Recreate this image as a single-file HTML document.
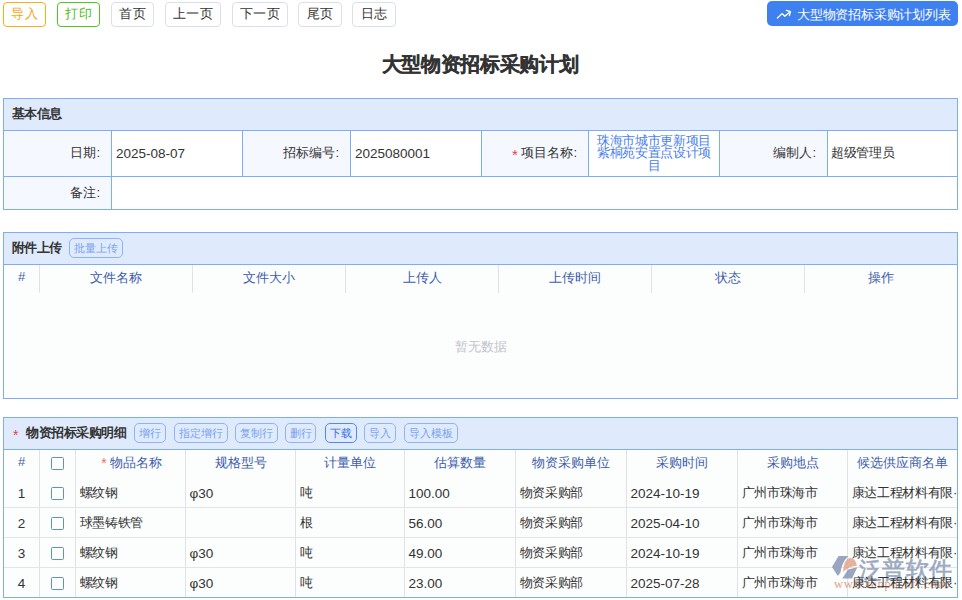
<!DOCTYPE html>
<html><head><meta charset="utf-8">
<style>
*{box-sizing:border-box;margin:0;padding:0}
html,body{width:962px;height:600px;overflow:hidden;background:#fff}
body{position:relative;font-family:"Liberation Sans",sans-serif;font-size:13px;color:#333;letter-spacing:-0.3px}
.a{position:absolute}
.n{font-size:13.8px;letter-spacing:0}
.val .n{position:relative;top:1px;left:1px;font-size:13.5px}
.tb{position:absolute;top:2px;height:25px;border:1px solid #dcdfe6;border-radius:4px;text-align:center;line-height:22px;font-size:13px;color:#333;background:#fff;letter-spacing:0.3px;text-indent:0.3px}
.sec{position:absolute;left:3px;width:955px;border:1px solid #7dacf8;background:#fff}
.hd{position:absolute;left:0;top:0;width:953px;height:32px;background:#dfeafd;border-bottom:1px solid #7dacf8}
.hd .t{position:absolute;left:8px;top:-1px;line-height:31px;font-weight:bold;font-size:13px;color:#333;letter-spacing:-0.6px}
.sb{position:absolute;top:5px;height:20px;border:1px solid #8db5f5;border-radius:5px;font-size:11px;line-height:18px;text-align:center;color:#78a3ef;background:transparent;letter-spacing:0}
.lbl{position:absolute;background:#f5f8fe;text-align:right;padding-right:11px;color:#333;letter-spacing:0}
.ast{color:#f23a4e;font-size:15px;line-height:10px;position:relative;top:3px}
.val{position:absolute;background:#fff;padding-left:3px;color:#333}
.vl{position:absolute;width:1px;background:#7dacf8}
.hl{position:absolute;height:1px;background:#7dacf8}
.gv{position:absolute;width:1px;background:#e1e1e6}
.gh{position:absolute;height:1px;background:#e4e4e4}
.th{position:absolute;text-align:center;color:#3c5cab;line-height:25px;letter-spacing:0}
.td .n{font-size:13.5px;position:relative;top:1px;letter-spacing:0.1px}
.td{position:absolute;z-index:2;line-height:30px;color:#333;white-space:nowrap;overflow:hidden}
.cb{position:absolute;width:13px;height:13px;border:1px solid #5a8af4;border-radius:1.5px;background:#fff}
</style></head><body>
<div class="tb" style="left:3px;width:43px;border-color:#faad14;color:#faa514">导入</div>
<div class="tb" style="left:57px;width:43px;border-color:#52c41a;color:#4cbc18">打印</div>
<div class="tb" style="left:111px;width:43px;">首页</div>
<div class="tb" style="left:165px;width:56px;">上一页</div>
<div class="tb" style="left:232px;width:56px;">下一页</div>
<div class="tb" style="left:298px;width:44px;">尾页</div>
<div class="tb" style="left:352px;width:44px;">日志</div>
<div class="a" style="left:767px;top:1px;width:191px;height:25px;background:#3f80f1;border-radius:5px;color:#fff;font-size:13px;line-height:25px">
<svg class="a" style="left:9px;top:8px" width="18" height="12" viewBox="0 0 18 12"><path d="M1.4 9 L6 4.6 L8.8 7.2 L14.2 2.8" fill="none" stroke="#fff" stroke-width="1.3" stroke-linecap="round" stroke-linejoin="round"/><path d="M10.4 1.3 L14.5 2.6 L13.4 6.6" fill="none" stroke="#fff" stroke-width="1.3" stroke-linecap="round" stroke-linejoin="round"/></svg>
<span class="a" style="left:30px;top:1px;letter-spacing:-0.2px">大型物资招标采购计划列表</span></div>
<div class="a" style="left:-1px;top:52px;width:962px;text-align:center;font-size:20px;font-weight:bold;line-height:24px;color:#333;letter-spacing:-0.35px;-webkit-text-stroke:0.25px #333">大型物资招标采购计划</div>
<div class="sec" style="top:98px;height:112px"><div class="hd"><span class="t">基本信息</span></div></div>
<div class="lbl" style="left:4px;top:131px;width:107px;height:45px;line-height:44px">日期:</div>
<div class="val" style="left:112px;top:131px;width:130px;height:45px;line-height:44px"><span class="n">2025-08-07</span></div>
<div class="lbl" style="left:243px;top:131px;width:107px;height:45px;line-height:44px">招标编号:</div>
<div class="val" style="left:351px;top:131px;width:130px;height:45px;line-height:44px"><span class="n">2025080001</span></div>
<div class="lbl" style="left:482px;top:131px;width:106px;height:45px;line-height:44px"><span class="ast">*</span> 项目名称:</div>
<div class="val" style="left:589px;top:131px;width:130px;height:45px;padding:4px 3px 0 3px;text-align:center;color:#4a80ee;line-height:12.3px;letter-spacing:-0.3px;overflow:hidden">珠海市城市更新项目紫桐苑安置点设计项目</div>
<div class="lbl" style="left:720px;top:131px;width:107px;height:45px;line-height:44px">编制人:</div>
<div class="val" style="left:828px;top:131px;width:129px;height:45px;line-height:44px">超级管理员</div>
<div class="lbl" style="left:4px;top:177px;width:107px;height:32px;line-height:32px">备注:</div>
<div class="hl" style="left:3px;top:176px;width:955px"></div>
<div class="vl" style="left:111px;top:131px;height:78px"></div>
<div class="vl" style="left:242px;top:131px;height:45px"></div>
<div class="vl" style="left:350px;top:131px;height:45px"></div>
<div class="vl" style="left:481px;top:131px;height:45px"></div>
<div class="vl" style="left:588px;top:131px;height:45px"></div>
<div class="vl" style="left:719px;top:131px;height:45px"></div>
<div class="vl" style="left:827px;top:131px;height:45px"></div>
<div class="sec" style="top:232px;height:167px;background:#fcfdfd"><div class="hd"><span class="t">附件上传</span><div class="sb" style="left:65px;width:54px">批量上传</div></div></div>
<div class="th" style="left:4px;top:265px;width:35px;line-height:24px">#</div>
<div class="th" style="left:40px;top:265px;width:152px">文件名称</div>
<div class="th" style="left:193px;top:265px;width:152px">文件大小</div>
<div class="th" style="left:346px;top:265px;width:152px">上传人</div>
<div class="th" style="left:499px;top:265px;width:152px">上传时间</div>
<div class="th" style="left:652px;top:265px;width:152px">状态</div>
<div class="th" style="left:805px;top:265px;width:152px">操作</div>
<div class="gv" style="left:39px;top:265px;height:28px"></div>
<div class="gv" style="left:192px;top:265px;height:28px"></div>
<div class="gv" style="left:345px;top:265px;height:28px"></div>
<div class="gv" style="left:498px;top:265px;height:28px"></div>
<div class="gv" style="left:651px;top:265px;height:28px"></div>
<div class="gv" style="left:804px;top:265px;height:28px"></div>
<div class="a" style="left:0;top:336px;width:962px;text-align:center;color:#c0c4cc;line-height:21px;letter-spacing:-0.1px">暂无数据</div>
<div class="sec" style="top:417px;height:181px;background:#fcfdfd"><div class="hd"><span class="a" style="left:9px;top:2px;line-height:31px;font-size:14px;color:#f23a4e">*</span><span class="t" style="left:22px;letter-spacing:-0.45px">物资招标采购明细</span><div class="sb" style="left:130px;width:32px;">增行</div><div class="sb" style="left:170px;width:54px;">指定增行</div><div class="sb" style="left:231px;width:43px;">复制行</div><div class="sb" style="left:281px;width:31px;">删行</div><div class="sb" style="left:321px;width:32px;border-color:#5089f2;color:#3a6fe6">下载</div><div class="sb" style="left:360px;width:32px;">导入</div><div class="sb" style="left:400px;width:54px;">导入模板</div></div></div>
<div class="th" style="left:4px;top:450px;width:35px;line-height:24px">#</div>
<div class="cb" style="left:51px;top:457px"></div>
<div class="th" style="left:76px;top:450px;width:109px;padding-left:2px"><span class="ast" style="margin-right:3px;top:1px;font-size:14px;color:#f26b6b">*</span>物品名称</div>
<div class="th" style="left:186px;top:450px;width:109px">规格型号</div>
<div class="th" style="left:296px;top:450px;width:108px">计量单位</div>
<div class="th" style="left:405px;top:450px;width:110px">估算数量</div>
<div class="th" style="left:516px;top:450px;width:110px">物资采购单位</div>
<div class="th" style="left:627px;top:450px;width:110px">采购时间</div>
<div class="th" style="left:738px;top:450px;width:109px">采购地点</div>
<div class="th" style="left:848px;top:450px;width:109px">候选供应商名单</div>
<div class="gv" style="left:39px;top:450px;height:147px"></div>
<div class="gv" style="left:75px;top:450px;height:147px"></div>
<div class="gv" style="left:185px;top:450px;height:147px"></div>
<div class="gv" style="left:295px;top:450px;height:147px"></div>
<div class="gv" style="left:404px;top:450px;height:147px"></div>
<div class="gv" style="left:515px;top:450px;height:147px"></div>
<div class="gv" style="left:626px;top:450px;height:147px"></div>
<div class="gv" style="left:737px;top:450px;height:147px"></div>
<div class="gv" style="left:847px;top:450px;height:147px"></div>
<div class="gh" style="left:4px;top:507px;width:953px"></div>
<div class="gh" style="left:4px;top:537px;width:953px"></div>
<div class="gh" style="left:4px;top:567px;width:953px"></div>
<div class="td" style="left:4px;top:478px;width:35px;text-align:center"><span class="n">1</span></div>
<div class="cb" style="left:51px;top:487px"></div>
<div class="td" style="left:76px;top:478px;width:109px;padding-left:3.5px">螺纹钢</div>
<div class="td" style="left:186px;top:478px;width:109px;padding-left:3.5px"><span class="n" style="letter-spacing:0">φ30</span></div>
<div class="td" style="left:296px;top:478px;width:108px;padding-left:3.5px">吨</div>
<div class="td" style="left:405px;top:478px;width:110px;padding-left:3.5px"><span class="n" style="letter-spacing:0">100.00</span></div>
<div class="td" style="left:516px;top:478px;width:110px;padding-left:3.5px">物资采购部</div>
<div class="td" style="left:627px;top:478px;width:110px;padding-left:3.5px"><span class="n" style="letter-spacing:0">2024-10-19</span></div>
<div class="td" style="left:738px;top:478px;width:109px;padding-left:3.5px">广州市珠海市</div>
<div class="td" style="left:848px;top:478px;width:109px;padding-left:3.5px">康达工程材料有限<span style="letter-spacing:0">·</span></div>
<div class="td" style="left:4px;top:508px;width:35px;text-align:center"><span class="n">2</span></div>
<div class="cb" style="left:51px;top:517px"></div>
<div class="td" style="left:76px;top:508px;width:109px;padding-left:3.5px">球墨铸铁管</div>
<div class="td" style="left:186px;top:508px;width:109px;padding-left:3.5px"></div>
<div class="td" style="left:296px;top:508px;width:108px;padding-left:3.5px">根</div>
<div class="td" style="left:405px;top:508px;width:110px;padding-left:3.5px"><span class="n" style="letter-spacing:0">56.00</span></div>
<div class="td" style="left:516px;top:508px;width:110px;padding-left:3.5px">物资采购部</div>
<div class="td" style="left:627px;top:508px;width:110px;padding-left:3.5px"><span class="n" style="letter-spacing:0">2025-04-10</span></div>
<div class="td" style="left:738px;top:508px;width:109px;padding-left:3.5px">广州市珠海市</div>
<div class="td" style="left:848px;top:508px;width:109px;padding-left:3.5px">康达工程材料有限<span style="letter-spacing:0">·</span></div>
<div class="td" style="left:4px;top:538px;width:35px;text-align:center"><span class="n">3</span></div>
<div class="cb" style="left:51px;top:547px"></div>
<div class="td" style="left:76px;top:538px;width:109px;padding-left:3.5px">螺纹钢</div>
<div class="td" style="left:186px;top:538px;width:109px;padding-left:3.5px"><span class="n" style="letter-spacing:0">φ30</span></div>
<div class="td" style="left:296px;top:538px;width:108px;padding-left:3.5px">吨</div>
<div class="td" style="left:405px;top:538px;width:110px;padding-left:3.5px"><span class="n" style="letter-spacing:0">49.00</span></div>
<div class="td" style="left:516px;top:538px;width:110px;padding-left:3.5px">物资采购部</div>
<div class="td" style="left:627px;top:538px;width:110px;padding-left:3.5px"><span class="n" style="letter-spacing:0">2024-10-19</span></div>
<div class="td" style="left:738px;top:538px;width:109px;padding-left:3.5px">广州市珠海市</div>
<div class="td" style="left:848px;top:538px;width:109px;padding-left:3.5px">康达工程材料有限<span style="letter-spacing:0">·</span></div>
<div class="td" style="left:4px;top:568px;width:35px;text-align:center"><span class="n">4</span></div>
<div class="cb" style="left:51px;top:577px"></div>
<div class="td" style="left:76px;top:568px;width:109px;padding-left:3.5px">螺纹钢</div>
<div class="td" style="left:186px;top:568px;width:109px;padding-left:3.5px"><span class="n" style="letter-spacing:0">φ30</span></div>
<div class="td" style="left:296px;top:568px;width:108px;padding-left:3.5px">吨</div>
<div class="td" style="left:405px;top:568px;width:110px;padding-left:3.5px"><span class="n" style="letter-spacing:0">23.00</span></div>
<div class="td" style="left:516px;top:568px;width:110px;padding-left:3.5px">物资采购部</div>
<div class="td" style="left:627px;top:568px;width:110px;padding-left:3.5px"><span class="n" style="letter-spacing:0">2025-07-28</span></div>
<div class="td" style="left:738px;top:568px;width:109px;padding-left:3.5px">广州市珠海市</div>
<div class="td" style="left:848px;top:568px;width:109px;padding-left:3.5px">康达工程材料有限<span style="letter-spacing:0">·</span></div>
<div class="a" style="left:830px;top:553px;width:130px;height:40px;letter-spacing:0;z-index:1;opacity:0.85">
<svg class="a" style="left:0;top:0" width="30" height="28" viewBox="0 0 30 28">
<path d="M8.5 3 L18.3 3 Q11.5 10 10.5 19.5 L7.8 23 L2 14 Z" fill="#8a98b5"/>
<path d="M13 19 Q14 5.5 20 5 Q25.5 5 27 12.7 Q19 13 13 19 Z" fill="#e3a68a"/>
<path d="M18 16.5 L27.3 14.3 L22 25.5 L12.3 25.5 Z" fill="#8a98b5"/>
</svg>
<span class="a" style="left:29px;top:2px;font-size:23px;line-height:30px;font-weight:normal;-webkit-text-stroke:0.6px #8d9bb7;color:#8d9bb7;letter-spacing:0.3px">泛普软件</span>
<span class="a" style="left:4px;top:25px;font-family:'Liberation Serif',serif;font-size:12.5px;line-height:12px;color:#de9274;letter-spacing:0.75px">www.fanpusoft.com</span>
</div>
</body></html>
